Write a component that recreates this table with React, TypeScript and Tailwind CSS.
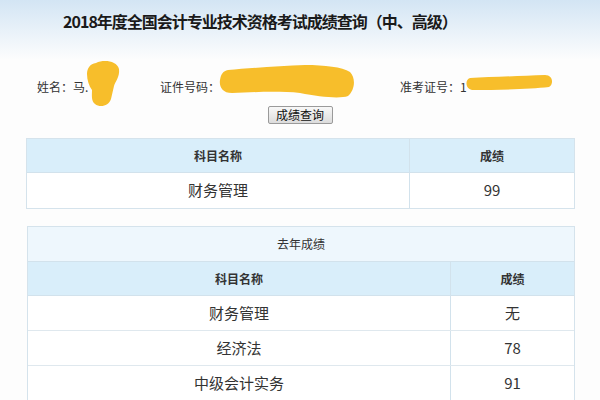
import React from "react";

const font = { fontFamily: '"Noto Sans CJK SC", "Noto Sans", sans-serif' };

function Scribbles() {
  return (
    <svg className="absolute left-0 top-0 pointer-events-none" width="600" height="140" viewBox="0 0 600 140">
      <g fill="#f7be2b">
        <path d="M96 63 C 104 59, 117 61, 119 69 C 120 77, 115 82, 114 86 C 113 90, 112 95, 111 99 C 109 106, 100 108, 95 104 C 91 101, 92 95, 92 90 C 89 86, 87 80, 87 74 C 87 68, 90 64, 96 63 Z" />
        <path d="M228 70 C 250 68, 280 66, 305 65 C 325 65, 342 67, 350 72 C 356 78, 355 90, 348 96 C 340 99, 320 97, 300 93 C 280 91, 255 92, 232 93 C 222 93, 219 86, 220 80 C 221 74, 223 71, 228 70 Z" />
        <path d="M470 78 C 490 77, 520 76, 545 75 C 553 75, 554 84, 549 87 C 530 89, 500 90, 472 90 C 465 89, 465 79, 470 78 Z" />
      </g>
    </svg>
  );
}

export default function App() {
  return (
    <div className="relative w-[600px] h-[400px] overflow-hidden bg-[#fdfdfd] text-[#333]" style={font}>
      <div className="h-[60px] bg-linear-to-b from-[#d3e5f4] to-[#fdfdfd]">
        <div className="w-[520px] pt-[11px] text-center text-[16px] leading-[20px] font-bold tracking-[-1px] text-[#1a1a1a]">
          2018年度全国会计专业技术资格考试成绩查询（中、高级）
        </div>
      </div>
      <div className="mt-[17px] flex h-[20px] items-center text-[12px] leading-[20px] pl-[37px]">
        <div className="w-[123px]">姓名：马.</div>
        <div className="w-[240px]">证件号码：</div>
        <div>准考证号：1</div>
      </div>
      <div className="mt-[9px] flex justify-center">
        <button className="h-[18px] w-[65px] border border-[#9a9a9a] rounded-[2px] bg-linear-to-b from-[#f8f8f8] to-[#dcdcdc] text-[12px] leading-[16px] text-[#111]">
          成绩查询
        </button>
      </div>

      <div className="mt-[14px] mx-[26px] w-[549px] border border-[#d5e3ec] bg-white">
        <div className="flex h-[34px] bg-[#d9eefa] border-b border-[#d2e2ec] text-[12px] font-bold items-stretch">
          <div className="w-[383px] flex items-center justify-center border-r border-[#d2e2ec]">科目名称</div>
          <div className="flex-1 flex items-center justify-center">成绩</div>
        </div>
        <div className="flex h-[35px] text-[15px] items-stretch">
          <div className="w-[383px] flex items-center justify-center border-r border-[#d2e2ec]">财务管理</div>
          <div className="flex-1 flex items-center justify-center">99</div>
        </div>
      </div>

      <div className="mt-[17px] ml-[27px] w-[548px] border border-[#d5e3ec] bg-white">
        <div className="h-[35px] flex items-center justify-center bg-[#eef7fd] border-b border-[#d2e2ec] text-[12px]">去年成绩</div>
        <div className="flex h-[34px] bg-[#d9eefa] border-b border-[#d2e2ec] text-[12px] font-bold items-stretch">
          <div className="w-[423px] flex items-center justify-center border-r border-[#d2e2ec]">科目名称</div>
          <div className="flex-1 flex items-center justify-center">成绩</div>
        </div>
        {[
          ["财务管理", "无"],
          ["经济法", "78"],
          ["中级会计实务", "91"],
        ].map(([a, b]) => (
          <div key={a} className="flex h-[35px] text-[15px] items-stretch border-b border-[#dfe8ee]">
            <div className="w-[423px] flex items-center justify-center border-r border-[#d2e2ec]">{a}</div>
            <div className="flex-1 flex items-center justify-center">{b}</div>
          </div>
        ))}
      </div>

      <Scribbles />
    </div>
  );
}
